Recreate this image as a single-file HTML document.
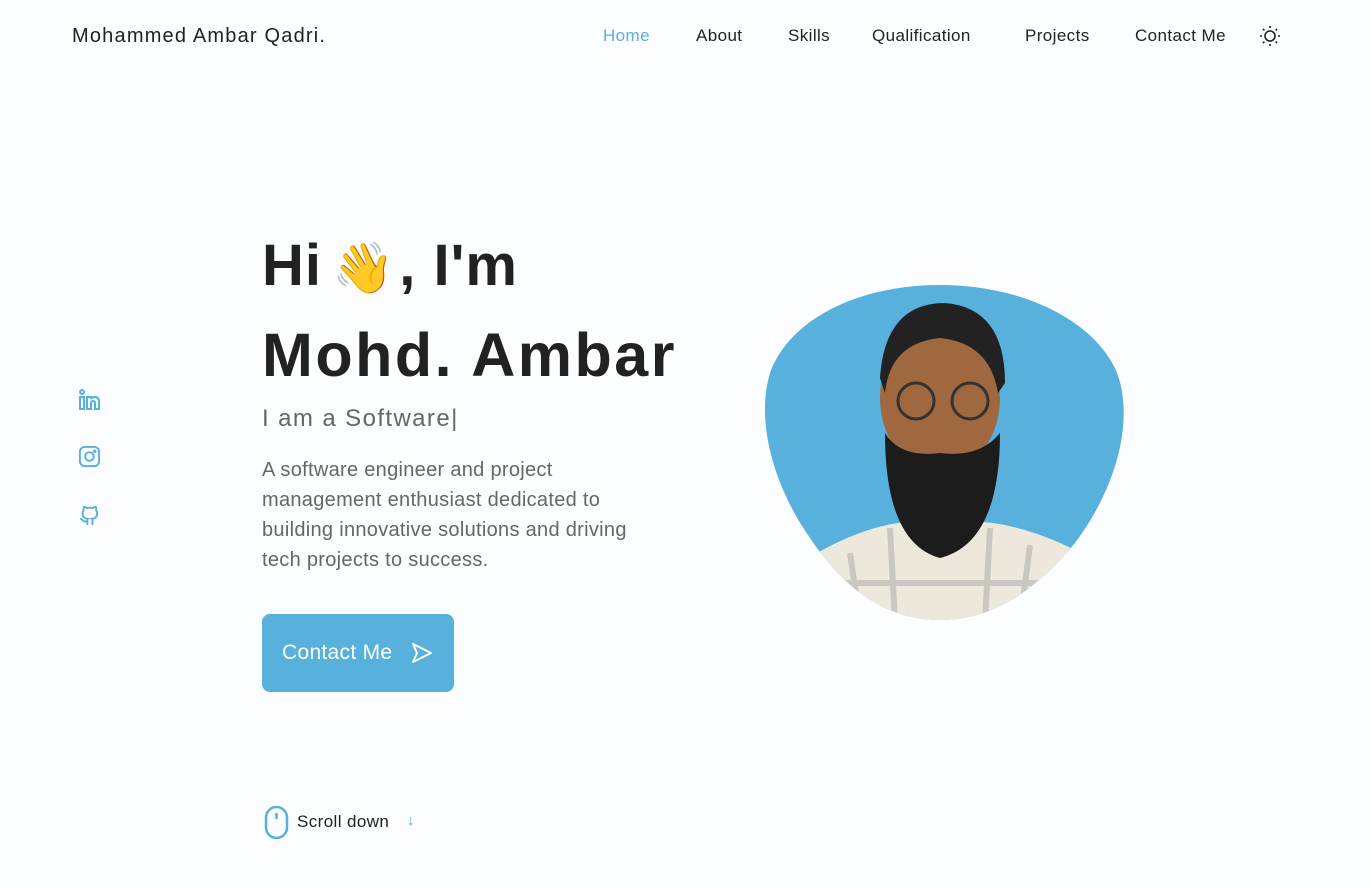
<!DOCTYPE html>
<html><head><meta charset="utf-8"><style>
*{margin:0;padding:0;box-sizing:border-box}
body{width:1370px;height:889px;background:#fbfdfe;font-family:"Liberation Sans",sans-serif;color:#222;position:relative;overflow:hidden}
.a{position:absolute;white-space:nowrap}
.nav{font-size:17px;top:26px;letter-spacing:.4px}
</style></head><body>
<div class="a" style="left:72px;top:25px;font-size:20px;color:#222;letter-spacing:1.2px">Mohammed Ambar Qadri.</div>
<div class="a nav" style="left:603px;color:#58b0dc">Home</div>
<div class="a nav" style="left:696px">About</div>
<div class="a nav" style="left:788px">Skills</div>
<div class="a nav" style="left:872px">Qualification</div>
<div class="a nav" style="left:1025px">Projects</div>
<div class="a nav" style="left:1135px">Contact Me</div>
<svg class="a" style="left:1259px;top:25px" width="22" height="22" viewBox="0 0 22 22" fill="none" stroke="#222" stroke-width="1.6"><circle cx="11" cy="11" r="5"/><path d="M11 1v2M11 19v2M1 11h2M19 11h2M4 4l1.4 1.4M16.6 16.6L18 18M4 18l1.4-1.4M16.6 5.4L18 4"/></svg>

<svg class="a" style="left:78px;top:388px" width="24" height="24" viewBox="0 0 24 24" fill="none" stroke="#58b0dc" stroke-width="2"><rect x="2" y="9" width="4" height="12"/><circle cx="4" cy="4" r="2"/><path d="M9 21V9h4v2c1-2 3-2 4-2 3 0 4 2 4 5v7h-4v-6c0-2-1-2-2-2s-2 1-2 2v6z"/></svg>
<svg class="a" style="left:78px;top:445px" width="23" height="23" viewBox="0 0 24 24" fill="none" stroke="#58b0dc" stroke-width="2"><rect x="2" y="2" width="20" height="20" rx="5"/><circle cx="12" cy="12" r="4.5"/><circle cx="17.5" cy="6.5" r=".8" fill="#58b0dc"/></svg>
<svg class="a" style="left:78px;top:502px" width="23" height="25" viewBox="0 0 24 24" fill="none" stroke="#58b0dc" stroke-width="2" stroke-linecap="round"><path d="M9 19c-4 1.5-4-2-6-2.5M15 22v-3.5c0-1 .1-1.5-.5-2 2.8-.3 5.5-1.4 5.5-6 0-1.2-.4-2.3-1.2-3.2.1-.3.5-1.5-.1-3.2 0 0-1-.3-3.3 1.2a11 11 0 0 0-6 0C7.1 3.8 6.1 4.1 6.1 4.1c-.6 1.7-.2 2.9-.1 3.2C5.2 8.2 4.8 9.3 4.8 10.5c0 4.6 2.7 5.7 5.5 6-.6.5-.6 1.2-.5 2V22"/></svg>

<div class="a" style="left:262px;top:232px;font-size:58px;font-weight:bold;color:#222;letter-spacing:1px">Hi<span style="font-size:50px;font-family:'Noto Color Emoji',sans-serif;margin:0 4px 0 10px">👋</span>, I'm</div>
<div class="a" style="left:262px;top:320px;font-size:61px;font-weight:bold;color:#222;letter-spacing:2.5px">Mohd. Ambar</div>
<div class="a" style="left:262px;top:405px;font-size:24px;color:#666;letter-spacing:1.4px">I am a Software|</div>
<div class="a" style="left:262px;top:455px;font-size:20px;line-height:30px;color:#666;letter-spacing:.3px">A software engineer and project<br>management enthusiast dedicated to<br>building innovative solutions and driving<br>tech projects to success.</div>

<div class="a" style="left:262px;top:614px;width:192px;height:78px;background:#58b0dc;border-radius:8px;color:#fff;font-size:21px;padding:27px 0 0 20px;letter-spacing:.3px">Contact Me
<svg style="position:absolute;left:148px;top:27px" width="24" height="24" viewBox="0 0 24 24" fill="none" stroke="#fff" stroke-width="2" stroke-linejoin="round"><path d="M3 3l18 9-18 9 4-9z"/></svg></div>

<svg class="a" style="left:264px;top:805px" width="26" height="35" viewBox="0 0 26 35" fill="none" stroke="#58b0dc" stroke-width="2.5"><rect x="2" y="2" width="21" height="31" rx="10.5"/><path d="M12.5 8v6"/></svg>
<div class="a" style="left:297px;top:812px;font-size:17px;color:#222;letter-spacing:.4px">Scroll down</div>
<div class="a" style="left:407px;top:812px;font-size:15px;color:#58b0dc">↓</div>

<svg class="a" style="left:760px;top:283px" width="366" height="340" viewBox="0 0 366 340">
<defs><clipPath id="c"><path d="M180 2C260 2 330 35 355 85 375 130 360 200 315 260 270 315 225 337 180 337 135 337 90 315 50 255 15 205 -5 140 10 90 30 35 100 2 180 2Z"/></clipPath></defs>
<g clip-path="url(#c)">
<rect width="366" height="340" fill="#58b0dc"/>
<path d="M40 280 Q120 230 180 240 Q250 230 330 275 L340 340 L30 340Z" fill="#ece8dc"/>
<path d="M90 270l10 70M130 245l5 95M230 245l-5 95M270 262l-10 78M60 300h250" stroke="#c8c8c0" stroke-width="6" fill="none"/>
<ellipse cx="180" cy="115" rx="60" ry="75" fill="#a0683f"/>
<path d="M120 95 Q125 20 185 20 Q245 25 245 100 L238 110 Q230 60 180 55 Q130 60 125 110Z" fill="#222"/>
<path d="M125 150 Q125 260 180 275 Q240 260 240 150 Q220 175 180 170 Q140 175 125 150Z" fill="#1c1c1c"/>
<circle cx="156" cy="118" r="18" fill="none" stroke="#333" stroke-width="3"/><circle cx="210" cy="118" r="18" fill="none" stroke="#333" stroke-width="3"/>
</g></svg>
</body></html>
